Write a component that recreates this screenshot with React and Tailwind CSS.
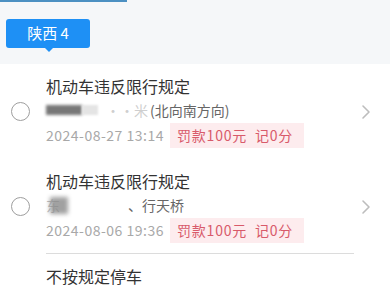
import React from "react";

const font = { fontFamily: '"Noto Sans CJK SC", "Noto Sans", sans-serif' };

function Chevron() {
  return (
    <svg width="10" height="16" viewBox="0 0 10 16" className="shrink-0">
      <path d="M2 2 L8 8 L2 14" fill="none" stroke="#bdbdbd" strokeWidth="1.6" strokeLinecap="round" strokeLinejoin="round" />
    </svg>
  );
}

function Item({ title, address, date, last }) {
  return (
    <div className="flex items-center pl-[11px] pr-[19px]">
      <div className="w-[19px] h-[19px] rounded-full border border-[#9e9e9e] shrink-0" />
      <div className={`flex-1 ml-[16px] pt-[12px] ${last ? "pb-[10px] border-b border-[#dcdcdc]" : "pb-[11px]"}`}>
        <div className="text-[16px] leading-[20px] text-[#333]">{title}</div>
        <div className="mt-[4px] h-[20px] text-[14px] leading-[20px] text-[#666] flex items-center">{address}</div>
        <div className="mt-[3px] flex items-center h-[25px]">
          <span className="text-[14px] text-[#a8a8a8] w-[124px] tracking-[0.5px]">{date}</span>
          <span className="h-[25px] w-[134px] flex items-center pl-[7px] bg-[#fdecee] text-[14px] text-[#d85a6a] whitespace-pre tracking-[0.8px]">
            罚款100元  记0分
          </span>
        </div>
      </div>
      <div className="pl-[7px]">
        <Chevron />
      </div>
    </div>
  );
}

export default function App() {
  const addr1 = (
    <>
      <span className="inline-block w-[36px] h-[10px] bg-[#777] blur-[1.5px] shrink-0" />
      <span className="inline-block w-[16px] h-[10px] bg-[#e4e4e4] blur-[1px] shrink-0" />
      <span className="shrink-0 pl-[8px] pr-[2px] text-[#cfcfcf]">··米</span>
      <span className="shrink-0">(北向南方向)</span>
    </>
  );
  const addr2 = (
    <>
      <span className="text-[#bbb]">东</span>
      <span className="inline-block -ml-[10px] w-[18px] h-[17px] bg-[#8a8a8a] blur-[2px] opacity-80" />
      <span className="inline-block w-[60px]" />
      <span>、行天桥</span>
    </>
  );
  return (
    <div className="w-[390px] h-[292px] overflow-hidden bg-white" style={font}>
      <div className="h-[64px] bg-[#f5f7f9] relative">
        <div className="h-[2px] w-[127px] bg-[#4c90c2]" />
        <div className="relative ml-[6px] mt-[17px] w-[84px] h-[29px] rounded-[3px] bg-[#1e90f5] text-white text-[15px] flex items-center justify-center whitespace-pre">
          陕西 4
          <div className="absolute left-[38px] -bottom-[4px] w-0 h-0 border-l-[5px] border-r-[5px] border-t-[5px] border-l-transparent border-r-transparent border-t-[#1e90f5]" />
        </div>
      </div>
      <Item title="机动车违反限行规定" address={addr1} date="2024-08-27 13:14" />
      <Item title="机动车违反限行规定" address={addr2} date="2024-08-06 19:36" last />
      <div className="pl-[46px] pt-[12px] text-[16px] leading-[20px] text-[#333]">不按规定停车</div>
    </div>
  );
}
